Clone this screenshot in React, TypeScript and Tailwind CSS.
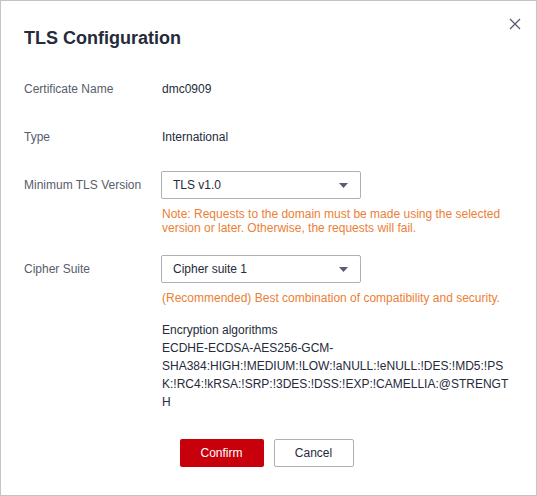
const FONT = { fontFamily: '"Liberation Sans", Arial, sans-serif' };

const CIPHERS =
  "ECDHE-ECDSA-AES256-GCM-SHA384:HIGH:!MEDIUM:!LOW:!aNULL:!eNULL:!DES:!MD5:!PSK:!RC4:!kRSA:!SRP:!3DES:!DSS:!EXP:!CAMELLIA:@STRENGTH";

const Select = ({ value }: { value: string }) => (
  <div className="flex h-[28px] w-[200px] items-center justify-between rounded-[2px] border border-[#adb0b8] bg-white pl-[11px] pr-[12px] text-[12px] text-[#252b3a]">
    <span>{value}</span>
    <svg width="9" height="5" viewBox="0 0 9 5">
      <path d="M0 0h9L4.5 5z" fill="#575d6c" />
    </svg>
  </div>
);

export default function App() {
  return (
    <div
      style={FONT}
      className="relative h-[496px] w-[537px] border border-[#c4c4c4] bg-white pl-[23px] pr-[27px] pt-[25px]"
    >
      {/* close */}
      <button className="absolute right-[15px] top-[17px] flex h-[12px] w-[12px] items-center justify-center">
        <svg width="12" height="12" viewBox="0 0 12 12">
          <path d="M1 1l10 10M11 1L1 11" stroke="#575d6c" strokeWidth="1.3" />
        </svg>
      </button>

      <h2 className="text-[18px] font-bold leading-[24px] text-[#252b3a]">
        TLS Configuration
      </h2>

      <div className="mt-[30px] flex flex-col text-[12px] leading-[18px]">
        {/* Certificate Name */}
        <div className="flex h-[18px] items-center">
          <div className="w-[137px] shrink-0 text-[#575d6c]">Certificate Name</div>
          <div className="pl-px text-[#252b3a]">dmc0909</div>
        </div>

        {/* Type */}
        <div className="mt-[30px] flex h-[18px] items-center">
          <div className="w-[137px] shrink-0 text-[#575d6c]">Type</div>
          <div className="pl-px text-[#252b3a]">International</div>
        </div>

        {/* Minimum TLS Version */}
        <div className="mt-[25px] flex">
          <div className="flex h-[28px] w-[137px] shrink-0 items-center text-[#575d6c]">
            Minimum TLS Version
          </div>
          <div className="flex min-w-0 flex-1 flex-col">
            <Select value="TLS v1.0" />
            <p className="mt-[8px] pl-px leading-[14px] text-[#ec8036]">
              Note: Requests to the domain must be made using the selected
              version or later. Otherwise, the requests will fail.
            </p>
          </div>
        </div>

        {/* Cipher Suite */}
        <div className="mt-[20px] flex">
          <div className="flex h-[28px] w-[137px] shrink-0 items-center text-[#575d6c]">
            Cipher Suite
          </div>
          <div className="flex min-w-0 flex-1 flex-col">
            <Select value="Cipher suite 1" />
            <p className="mt-[8px] pl-px leading-[14px] text-[#ec8036]">
              (Recommended) Best combination of compatibility and security.
            </p>
            <div className="mt-[16px] pl-px leading-[18px] text-[#252b3a]">
              <div>Encryption algorithms</div>
              <div className="[overflow-wrap:anywhere]">{CIPHERS}</div>
            </div>
          </div>
        </div>
      </div>

      {/* footer */}
      <div className="mt-[28px] flex justify-center gap-[10px] text-[12px]">
        <button className="h-[28px] w-[84px] rounded-[2px] bg-[#c7000b] text-white">
          Confirm
        </button>
        <button className="h-[28px] w-[80px] rounded-[2px] border border-[#adb0b8] bg-white text-[#252b3a]">
          Cancel
        </button>
      </div>
    </div>
  );
}
